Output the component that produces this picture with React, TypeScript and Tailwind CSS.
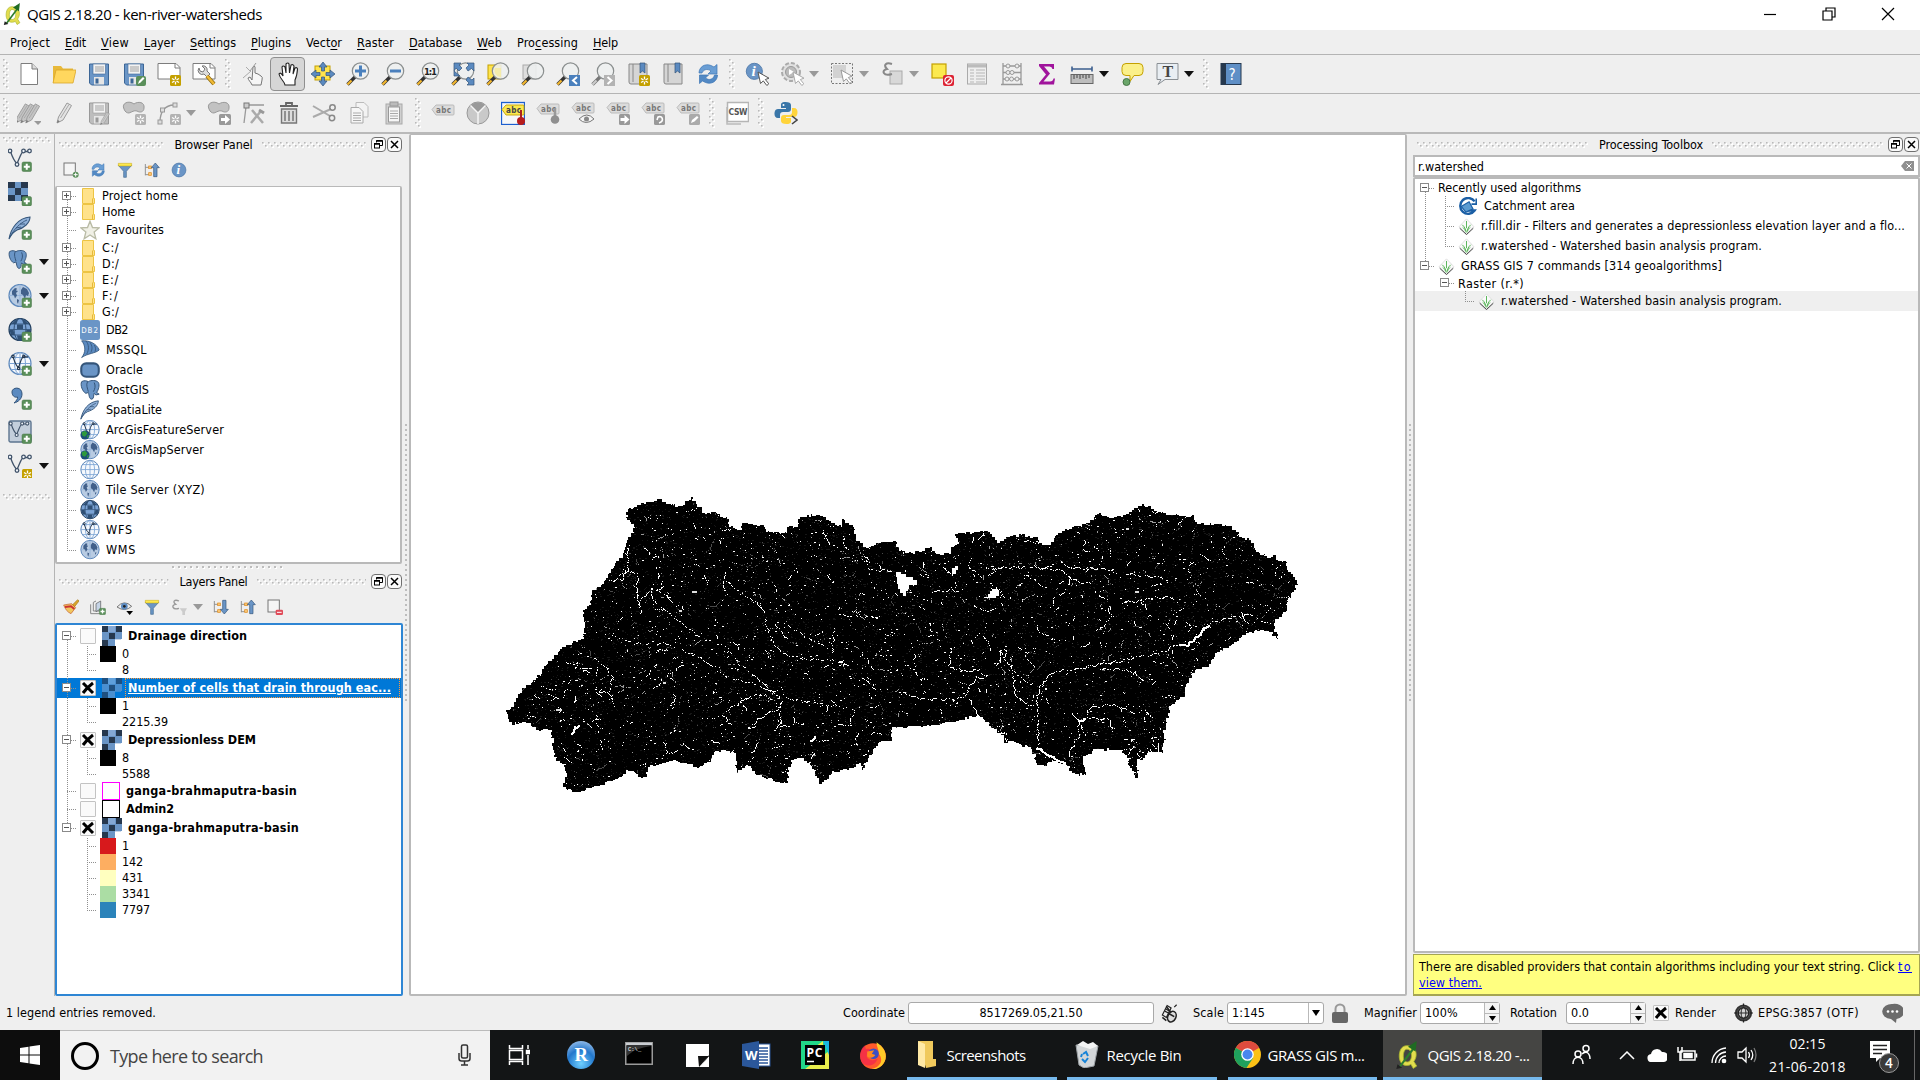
import React, { ReactNode, useLayoutEffect, useRef, useState } from "react";

/* Text set to an exact run width by adjusting its tracking. */
function T({ w, className = "", children }: { w?: number; className?: string; children: ReactNode }) {
  const ref = useRef<HTMLSpanElement>(null);
  const [sp, setSp] = useState(0);
  useLayoutEffect(() => {
    const el = ref.current;
    if (!el || !w) return;
    const n = (el.textContent || "").length || 1;
    setSp((w - el.getBoundingClientRect().width) / n);
  }, []);
  return (
    <span ref={ref} className={"inline-block shrink-0 whitespace-pre " + className} style={{ letterSpacing: sp + "px" }}>
      {children}
    </span>
  );
}

function Svg({ s = 24, vb = 24, children }: { s?: number; vb?: number; children: ReactNode }) {
  return (
    <svg width={s} height={s} viewBox={`0 0 ${vb} ${vb}`} fill="none" className="block shrink-0">
      {children}
    </svg>
  );
}

const Defs = () => (
  <svg width="0" height="0" className="absolute">
    <defs>
      <pattern id="gv" width="6" height="6" patternUnits="userSpaceOnUse">
        <rect x="1" y="1" width="2" height="2" fill="#fff" />
        <rect width="1.6" height="1.6" fill="#b9b9b9" />
        <rect x="4" y="4" width="2" height="2" fill="#fff" />
        <rect x="3" y="3" width="1.6" height="1.6" fill="#b9b9b9" />
      </pattern>
      <pattern id="gd" width="6" height="5" patternUnits="userSpaceOnUse">
        <rect x="1" y="1" width="2" height="2" fill="#fff" />
        <rect width="2" height="2" fill="#bdbdbd" />
      </pattern>
    </defs>
  </svg>
);

const GripV = ({ w = 14 }: { w?: number }) => (
  <div className={(w === 11 ? "w-[11px]" : "w-[14px]") + " flex shrink-0 justify-center"}>
    <svg width="6" height="30" className="block"><rect width="6" height="30" fill="url(#gv)" /></svg>
  </div>
);
const GripH = () => (
  <svg className="block h-[6px] min-w-0 flex-1"><rect width="100%" height="6" fill="url(#gv)" /></svg>
);

/* ---------- badges ---------- */
const Plus = ({ x = 15, y = 15 }) => (
  <g transform={`translate(${x} ${y})`}>
    <rect width="9.5" height="9.5" rx="1.6" fill="#5a8f5a" stroke="#467546" strokeWidth=".5" />
    <path d="M4.75 1.8v6M1.8 4.75h6" stroke="#fff" strokeWidth="2" />
  </g>
);
const Star = ({ x = 13, y = 13, c = "#c4a000" }) => (
  <g transform={`translate(${x} ${y})`}>
    <rect width="11" height="11" rx="1.5" fill={c} />
    <path d="M5.5 1.5v8M2 3.5l7 4M9 3.5l-7 4" stroke="#fff" strokeWidth="1.3" />
    <circle cx="5.5" cy="5.5" r="1.3" fill={c} />
  </g>
);
const Lens = ({ children, gray = false }: { children?: ReactNode; gray?: boolean }) => (
  <g>
    <path d="M9 15l-7.5 7.500" stroke={gray ? "#777" : "#333"} strokeWidth="3.4" />
    <path d="M5.500 18.500l-4 4" stroke={gray ? "#ccc" : "#f5b82e"} strokeWidth="2.200" />
    <circle cx="14.500" cy="9" r="8.200" fill="#eef0f0" fillOpacity=".88" stroke="#8b8f8f" strokeWidth="1.200" />
    {children}
  </g>
);
const Cursor = ({ x = 13, y = 10, c = "#555" }) => (
  <path transform={`translate(${x} ${y})`} d="M0 0l2.500 11.500 2.800-2.600 3.500 4.600 2-1.700-3.500-4.300 3.700-1.300z" fill="#fff" stroke={c} strokeWidth="1" />
);
const Tag = ({ y = 3, hot = false }) => (
  <g transform={`translate(0 ${y})`}>
    <path d="M1 5.500L5 1h17q1 0 1 1v8q0 1-1 1H5z" fill={hot ? "#fce94f" : "#dcdcdc"} stroke={hot ? "#c4a000" : "#b5b5b5"} strokeWidth=".9" />
    <text x="5" y="9" fontFamily="DejaVu Sans Condensed" fontWeight="700" fontSize="8" fill={hot ? "#444" : "#777"} textLength="15">{"abc"}</text>
  </g>
);
const Pencil = ({ x = 0, c = "#e3e3e3" }) => (
  <g transform={`translate(${x} 0)`}>
    <path d="M4 22l1.500-6L14 2l4.500 2.500L10 19z" fill={c} stroke="#9b9b9b" />
    <path d="M4 22l.8-3 2 1.200z" fill="#777" />
    <path d="M7.500 17L16 3.500" stroke="#aaa" />
  </g>
);
const Blob = () => <path d="M2 8C-1 2 7-1 12 3c4-3 11-2 10 4 0 4-4 5-7 3-3-1-5 1-8 2-2 0-4-1-5-4z" fill="#c2c2c2" stroke="#999" />;
const Folder = () => (
  <g>
    <path d="M1 21V4h8l2 2.500h10V9H6L2 21z" fill="#e8b93a" />
    <path d="M1 21L4 8h20l-3 13z" fill="#ffd75e" stroke="#d9a62a" strokeWidth=".8" />
  </g>
);
const Floppy = ({ c = "#6a95c6", d = "#3c6696" }) => (
  <g>
    <path d="M2.500 2h19v21h-17l-2-2z" fill={c} stroke={d} />
    <rect x="6" y="2" width="12.500" height="10" fill="#f2f2f2" stroke={d} strokeWidth=".6" />
    <path d="M8 5h9M8 7h9M8 9h9" stroke="#999" strokeWidth=".9" />
    <rect x="7" y="15" width="10" height="7.500" fill="#e6e6e6" />
    <rect x="8.500" y="16.500" width="3" height="5" fill={d} />
  </g>
);
const Refresh = () => (
  <g>
    <path d="M3 11C3 5 9 1 15 3.500L18 5l3-2.500V12h-9l3-3c-4-3-8-1-9 2z" fill="#6a9ed4" stroke="#3c76b4" strokeWidth=".7" />
    <path d="M21.500 13c0 6-6 10-12 7.500L6.500 19l-3 2.500V13h9l-3 3c4 3 8 1 9-3z" fill="#5289c4" stroke="#3c76b4" strokeWidth=".7" />
  </g>
);
const Info = () => (
  <g>
    <circle cx="11" cy="11" r="9.500" fill="#6a95c6" stroke="#4a76a8" />
    <text x="7.500" y="17" fontFamily="Liberation Serif" fontStyle="italic" fontWeight="700" fontSize="18" fill="#fff">i</text>
  </g>
);
const Nodes = () => (
  <g stroke="#41536a" strokeWidth="1.300">
    <path d="M2.500 3.500C4 8 6 13 9 15.500 11 12 13 4 15.500 3.500h6" />
    {[[2, 3], [15.5, 3], [21.5, 3], [9, 16.500]].map(([x, y], i) => <circle key={i} cx={x} cy={y} r="1.800" fill="#eef3f8" />)}
  </g>
);
const Globe = ({ k = "wms", children }: { k?: string; children?: ReactNode }) => (
  <g>
    <circle cx="12" cy="11.500" r="11" fill={k === "wcs" ? "#7ba3d4" : k === "wms" ? "#b8cbe2" : "#f6f9fd"} stroke={k === "wcs" ? "#24405f" : "#5d88bb"} strokeWidth="1.200" />
    {k === "wms" ? (
      <g>
        <path d="M12 .5v22M1 11.500h22" stroke="#8fb0d8" strokeWidth=".8" />
        <path d="M4 7l3-3 2 .5-1 2 2 .5-2 2 1 2.500-2 3-1-3-2-1zM13 6l2-3 4 2 2 4-1 3-2-1-1 4-2-4-2-1zM9 15l2 1-1 4-1-2zM18 15l2 0-2 3z" fill="#41608a" />
      </g>
    ) : k === "wcs" ? (
      <g>
        <path d="M8 1.500h2L8.500 6H3.500zM14 1.500h2L20.500 6h-5zM9 6.500h6v4.500H9zM1.500 12h4l1 5H3zM22.500 12h-4l-1 5H21zM9 17.500h6l-1 5h-4z" fill="#2f4f74" />
        <path d="M1 11.500h22M3 6h18M3 17h18" stroke="#2f4f74" strokeWidth=".8" />
        <ellipse cx="12" cy="11.500" rx="6" ry="11" stroke="#2f4f74" />
      </g>
    ) : (
      <g stroke="#7ba3d4">
        <path d="M12 .5v22M1 11.500h22M3 5.500h18M3 17.500h18" />
        <ellipse cx="12" cy="11.500" rx="5.500" ry="11" />
      </g>
    )}
    {k === "wfs" && <g transform="translate(3 2) scale(.8)" stroke="#26384e" strokeWidth="1.500"><path d="M2.500 3.500C4 8 6 15 9.500 17 11 12 13 4 15.500 3.500h6" /><circle cx="2.500" cy="3" r="1.500" /><circle cx="16" cy="3" r="1.500" /><circle cx="9.500" cy="18" r="1.500" /></g>}
    {children}
  </g>
);
const Arc = () => <g><circle cx="6" cy="18" r="5.500" fill="#1d4f7a" /><path d="M2 15l4-2 3 3-3 4-3-1zM8 19l3-1-2 4z" fill="#2f9a3c" /></g>;
const Elephant = () => (
  <g fill="#6a95c6" stroke="#34557a" strokeWidth="1.200">
    <path d="M2 2c3-2 6-1 8 0 3-2 10-2 12 1 2 3 0 9-2 12l3 2-4 1-2-2c-1 2 0 7-3 7s-3-5-4-8l-3 1C3 14 0 6 2 2z" />
    <path d="M9 2c-2 4 0 8 1 12M17 3c2 4 1 8-1 11" />
  </g>
);
const Feather = () => (
  <g>
    <path d="M1 23C3 12 10 2 22 1c0 6-6 11-13 13-4 2-6 5-8 9z" fill="#8fb0d8" stroke="#34557a" strokeWidth="1.100" />
    <path d="M2 21C6 13 12 7 19 4M8 12l5-1M12 8l5 0" stroke="#34557a" strokeWidth=".9" />
  </g>
);
const Checker = ({ hl = false }: { hl?: boolean }) => {
  const d = hl ? "#1f5080" : "#26384e";
  const m = hl ? "#4a8fd0" : "#6a95c6";
  return (
    <g shapeRendering="crispEdges">
      <rect width="20" height="13" fill={m} /><rect y="13" width="13" height="7" fill={m} />
      <path d={"M0 0h6v6H0zM14 0h6v6h-6zM7 7h6v6H7zM0 14h6v6H0z"} fill={d} />
      <path d="M6 0h7v6H6z" fill={hl ? "#5fa0dc" : "#84a8d4"} />
      <path d="M13 13.500h6" stroke={hl ? "#4a8fd0" : "#b9cce4"} strokeWidth=".8" />
    </g>
  );
};
const BigChecker = () => (
  <g shapeRendering="crispEdges">
    <rect width="20" height="19" fill="#6a95c6" />
    <path d="M0 0h7v6H0zM13 0h7v6h-7zM7 6h6v7H7zM0 13h7v6H0zM13 13h7v6h-7z" fill="#26384e" />
  </g>
);
const Funnel = () => <g><path d="M2 5h20l-8 9v9h-4v-9z" fill="#6a95c6" stroke="#41698f" /><path d="M2 2h20v4H2z" fill="#fce94f" stroke="#c4a000" strokeWidth=".7" /></g>;
const Expand = ({ up = false }) => (
  <g>
    <path d="M2 3v17M2 8h6M2 19h6" stroke="#8b8b8b" strokeWidth="1.400" />
    <rect x="7" y="6" width="4" height="4" fill="#f8c471" stroke="#e08a1c" /><rect x="7" y="16" width="4" height="4" fill="#f8c471" stroke="#e08a1c" />
    <path transform={up ? "" : "rotate(180 17 12)"} d="M17 1.500l6 7h-3.500V22h-5V8.500H11z" fill="#6a95c6" stroke="#34557a" />
  </g>
);
const QLogo = ({ s = 22 }) => (
  <Svg s={s}>
    <path d="M11 4C6 4 4.500 9 4.500 13S6.500 21 11 21c1.500 0 2.500-.3 3.500-1l2 3.500 3-2-2.500-4c1.500-2 2-4 2-6C19 7 16 4 11 4zm0 3c3 0 4 3 4 5.500S14 18 11.500 18 8 16 8 13s1-6 3-6z" fill="#e3dd4e" stroke="#a9b52c" strokeWidth=".7" />
    <path d="M5 22L17 6" stroke="#2d7d2d" strokeWidth="1.800" /><path d="M3 20l4 3-5 1z" fill="#222" /><path d="M19.500 0l-1 9L12 5z" fill="#1f6b23" />
  </Svg>
);
const Grass = () => (
  <Svg s={17} vb={20}>
    <path d="M10 1l8.500 9-8.500 9-8.500-9z" fill="#fafafa" stroke="#dcdcdc" />
    <path d="M2 12l8 7.500 8-7.500" stroke="#333" strokeWidth="1.100" />
    <path d="M9.500 17C9 13 7.500 10 5 8M10 12V3.500M10.500 17c.5-4 2-7 4.500-9M8.500 15C8 13 7 12 5.500 11M11.500 15c.5-2 1.500-3 3-4" stroke="#3faa3f" strokeWidth="1" />
  </Svg>
);

/* ---------- toolbars ---------- */
const B = ({ children, on = false }: { children: ReactNode; on?: boolean }) => (
  <div className={"flex h-[34px] w-[35px] shrink-0 items-center justify-center " + (on ? "rounded-sm border border-[#8f8f8f] bg-[#d6d6d6]" : "")}>
    <Svg>{children}</Svg>
  </div>
);
const Dn = ({ c = "#999" }) => <div className="flex w-[15px] shrink-0 items-center"><svg width="10" height="6"><path d="M0 0h10L5 6z" fill={c} /></svg></div>;

const Toolbar1 = () => (
  <div className="flex h-[39px] shrink-0 items-center border-t border-[#b4b4b4] bg-[#efefef]">
    <GripV w={11} />
    <B><path d="M4 1.500h11l5.500 5.500v15.500H4z" fill="#fff" stroke="#7d7d7d" /><path d="M15 1.500V7h5.500" fill="#ddd" stroke="#7d7d7d" /></B>
    <B><Folder /></B>
    <B><Floppy /></B>
    <B><Floppy /><rect x="14" y="14" width="10" height="10" rx="2" fill="#5a8f5a" /><path d="M16 22l1-3 4-4 1.500 1.500-4 4z" fill="#fff" /></B>
    <B><path d="M1 1.500h18l4 4V17H1z" fill="#fff" stroke="#7d7d7d" /><path d="M18 1.500V6h5" stroke="#7d7d7d" /><Star /></B>
    <B><path d="M1 1.500h18l4 4V17H1z" fill="#fff" stroke="#7d7d7d" /><path d="M18 1.500V6h5" stroke="#7d7d7d" /><path d="M7 6a4 4 0 005 6l3 3 3-3-3-3a4 4 0 00-5-5l3 3-2 3-3-1z" fill="#ddd" stroke="#777" /><path d="M15 14l7 8" stroke="#8b6a10" strokeWidth="4" /><path d="M15 14l7 8" stroke="#f0b935" strokeWidth="2.600" /></B>
    <GripV />
    <B><path d="M2 16L10 9M5 5l4 4" stroke="#aaa" /><path d="M11 23c-1-3-4-5-4-7l2-1 2 3 1-13q1.500-2 2 0v6l3 1 3 2q2 1 1 4l-1 5z" fill="#f6f6f6" stroke="#777" /><path d="M9 9l6-8" stroke="#999" /></B>
    <B on><g transform="translate(1 0)"><path d="M8 23c0-3-5-6-6-11 1-2 3 0 4 2L5 5q1-2 3 0l1 6V2q2-2 3 0l.5 9L14 3q2-1 3 1l-1 8 2-6q2-1 2.500 1-.5 7-2.500 11v5z" fill="#fff" stroke="#222" strokeWidth="1.100" /></g></B>
    <B><rect x="4" y="4" width="15" height="14" fill="#ffe44d" stroke="#c4a000" /><path d="M12 0l4 5h-2.500v4h-3V5H8zM12 24l4-5h-2.500v-4h-3v4H8zM0 12l5-4v2.500h4v3H5V16zM24 12l-5-4v2.500h-4v3h4V16z" fill="#5b8ac0" stroke="#34557a" strokeWidth=".7" /></B>
    <B><Lens><path d="M14.500 3.500v11M9 9h11" stroke="#4a80bd" strokeWidth="3" /></Lens></B>
    <B><Lens><path d="M9 9h11" stroke="#4a80bd" strokeWidth="3" /></Lens></B>
    <B><Lens><text x="8" y="12.500" fontFamily="DejaVu Sans Condensed" fontWeight="700" fontSize="9.500" fill="#222" textLength="13">1:1</text></Lens></B>
    <B><Lens /><path d="M3 1h7L8 3l3 3-3 3-3-3-2 3zM23 1v8l-2.500-2.500L17 9l-2-3 3-3-2-2zM23 23h-7l2-2-3-3 2-3 4 3 2-2zM3 14V9l6 5z" fill="#5b8ac0" stroke="#34557a" strokeWidth=".7" /></B>
    <B><rect x="2" y="3" width="13" height="14" fill="#ffe44d" stroke="#c4a000" /><Lens><path d="M9 6h6v9a6.500 6.500 0 01-6-9z" fill="#f4ecaa" /></Lens></B>
    <B><rect x="2" y="3" width="13" height="14" fill="#ddd" stroke="#aaa" /><Lens /></B>
    <B><Lens /><rect x="13" y="13" width="11" height="11" fill="#4a80bd" /><path d="M21 15l-4 3.500 4 3.500" stroke="#fff" strokeWidth="2" /></B>
    <B><Lens gray /><rect x="13" y="13" width="11" height="11" fill="#b3b3b3" /><path d="M16.500 15l4 3.500-4 3.500" stroke="#fff" strokeWidth="2" /></B>
    <B><path d="M3 2h18v20H5q-2 0-2-2z" fill="#d5d5d5" stroke="#888" /><path d="M7 2v18" stroke="#888" /><path d="M14 1h5v10l-2.500-2-2.500 2z" fill="#5b8ac0" stroke="#34557a" strokeWidth=".7" /><Star /></B>
    <B><path d="M3 2h18v20H5q-2 0-2-2z" fill="#d5d5d5" stroke="#888" /><path d="M7 2v18" stroke="#888" /><path d="M14 1h5v10l-2.500-2-2.500 2z" fill="#5b8ac0" stroke="#34557a" strokeWidth=".7" /></B>
    <B><Refresh /></B>
    <GripV />
    <B><g transform="scale(.85)"><Info /></g><Cursor /></B>
    <B><circle cx="11" cy="10" r="9" stroke="#aaa" strokeWidth="2" strokeDasharray="4 2" fill="#e0e0e0" /><circle cx="11" cy="10" r="5.500" fill="#bbb" stroke="#999" /><path d="M9 7l5 3-5 3z" fill="#fff" /><Cursor c="#aaa" /></B>
    <Dn />
    <B><rect x="1.500" y="1.500" width="21" height="20" stroke="#777" strokeDasharray="2 1.500" /><rect x="3" y="3" width="13" height="13" fill="#d2d2d2" /><Cursor x={11} y={8} c="#999" /></B>
    <Dn />
    <B><rect x="10" y="9" width="12" height="13" fill="#d8d8d8" stroke="#aaa" /><path d="M12 2C6 0 3 3 7 7 1 8 3 15 12 12" stroke="#888" strokeWidth="2" /></B>
    <Dn />
    <B><rect x="2" y="2" width="14" height="14" fill="#fce94f" stroke="#c4a000" strokeWidth="1.200" /><rect x="13" y="13" width="11" height="11" rx="2" fill="#d23" /><circle cx="18.500" cy="18.500" r="3.600" stroke="#fff" strokeWidth="1.200" /><path d="M16 21l5-5" stroke="#fff" strokeWidth="1.200" /></B>
    <B><rect x="2.500" y="2" width="19" height="20" fill="#eee" stroke="#aaa" /><path d="M3 4h18" stroke="#bbb" strokeWidth="3" /><path d="M5 8h4M11 8h9M5 11h4M11 11h9M5 14h4M11 14h9M5 17h4M11 17h9M5 20h4M11 20h9" stroke="#b5b5b5" strokeWidth="1.200" /></B>
    <B><path d="M3 1v21M21 1v21M1 22.500h22M3 4h18M3 10.500h18M3 17h18" stroke="#999" strokeWidth="1.300" /><g fill="#ececec" stroke="#999"><circle cx="8" cy="4" r="2" /><circle cx="17" cy="4" r="2" /><circle cx="8" cy="10.500" r="2" /><circle cx="12" cy="10.500" r="2" /><circle cx="7" cy="17" r="2" /><circle cx="11.500" cy="17" r="2" /><circle cx="17" cy="17" r="2" /></g></B>
    <B><path d="M4 2h15v5h-1.500q-.5-2.500-3-2.500H9l6 7-6.500 8H15q3 0 3.500-3H20l-1 6H4v-1.500l7-8.500-7-8.500z" fill="#a0149c" /></B>
    <B><path d="M2 7h20M2 4.500v5M22 4.500v5" stroke="#3c5f8f" strokeWidth="1.600" /><rect x="1" y="12.500" width="22" height="9" fill="#bdbdbd" stroke="#666" /><path d="M4 13v4M7 13v3M10 13v4M13 13v3M16 13v4M19 13v3" stroke="#444" /></B>
    <Dn c="#111" />
    <B><path d="M6 1.500h13q4 0 4 4v4q0 4-4 4h-5l-4 6V13.500H6q-4 0-4-4v-4q0-4 4-4z" fill="#fbf08a" stroke="#c4a000" /><circle cx="6.500" cy="20" r="3.500" fill="#6aa56a" stroke="#467546" /></B>
    <B><path d="M2 1.500h21v16H10l-7 5 3-5H2z" fill="#e9eef3" stroke="#8a8f94" /><text x="7.500" y="15" fontFamily="Liberation Serif" fontWeight="700" fontSize="16" fill="#444">T</text></B>
    <Dn c="#111" />
    <GripV />
    <B><rect x="2" y="1.500" width="20" height="21" fill="#5f8fc6" stroke="#26384e" /><rect x="2" y="1.500" width="5" height="21" fill="#26384e" /><text x="9.500" y="17.500" fontFamily="DejaVu Sans Condensed" fontSize="15" fill="#fff">?</text></B>
  </div>
);

const Toolbar2 = () => (
  <div className="flex h-[39px] shrink-0 items-center border-t border-[#b4b4b4] bg-[#efefef]">
    <GripV w={11} />
    <B><g transform="translate(-5 1) scale(.95)"><Pencil c="#c4c4c4" /></g><g transform="translate(0 1) scale(.95)"><Pencil c="#c4c4c4" /></g><g transform="translate(5 1) scale(.95)"><Pencil c="#c4c4c4" /></g><path d="M17 20h8l-4 4z" fill="#999" /></B>
    <B><Pencil x={1} /></B>
    <B><Floppy c="#bdbdbd" d="#999" /><g transform="translate(11 10) scale(.62)"><Pencil c="#ccc" /></g></B>
    <B><Blob /><Star c="#b3b3b3" /></B>
    <B><path d="M3 21C3 11 8 4 17 4" stroke="#999" strokeWidth="1.300" /><rect x="1" y="19" width="4" height="4" fill="#ddd" stroke="#999" /><rect x="3.500" y="7" width="4" height="4" fill="#ddd" stroke="#999" /><rect x="16" y="2" width="4" height="4" fill="#ddd" stroke="#999" /><Star c="#b3b3b3" /></B>
    <Dn />
    <B><Blob /><rect x="12" y="13" width="12" height="11" rx="1.500" fill="#999" /><path d="M14 17h4v-3l5 4.500-5 4.500v-3h-4z" fill="#fff" /></B>
    <B><path d="M5 4h17M4 6L2 22" stroke="#999" strokeWidth="1.300" /><rect x="2" y="2" width="5" height="5" fill="#ccc" stroke="#777" /><path d="M10 9l11 13M19 10L9 22" stroke="#aaa" strokeWidth="2.500" /><path d="M17 9l5 3" stroke="#999" strokeWidth="3" /></B>
    <B><path d="M3 5h18M9 5V2h6v3" stroke="#666" strokeWidth="1.800" /><path d="M4.500 8h15v14h-15z" fill="#ddd" stroke="#777" strokeWidth="1.400" /><path d="M8 10v10M12 10v10M16 10v10" stroke="#888" strokeWidth="1.800" /></B>
    <B><path d="M1 5l17 10M1 16L19 8" stroke="#aaa" strokeWidth="2" /><circle cx="20.500" cy="6.500" r="2.700" stroke="#888" strokeWidth="1.500" /><circle cx="20" cy="17" r="2.700" stroke="#888" strokeWidth="1.500" /></B>
    <B><path d="M9 1.500h8l4 4V16H9z" fill="#f3f3f3" stroke="#bbb" /><path d="M4 6.500h8l4 4V22H4z" fill="#f6f6f6" stroke="#aaa" /><path d="M6 12h8M6 14.500h8M6 17h8M6 19.500h8" stroke="#aaa" /></B>
    <B><rect x="4" y="3" width="16" height="20" fill="#d0d0d0" stroke="#aaa" /><rect x="6.500" y="6" width="11" height="15" fill="#f6f6f6" stroke="#999" /><rect x="8" y="1" width="8" height="4" fill="#bbb" stroke="#999" /><path d="M8 10h8M8 12.500h8M8 15h8M8 17.500h8" stroke="#aaa" /></B>
    <GripV />
    <B><Tag /></B>
    <B><circle cx="12" cy="12" r="11" fill="#c9c9c9" stroke="#999" /><path d="M12 12L4 5a11 11 0 0116 0z" fill="#999" /><path d="M12 23V12L4.500 4.500M12 12l7.500-7.500" stroke="#f5f5f5" strokeWidth="1.500" /></B>
    <B><rect x=".5" y="1.500" width="23" height="22" fill="#f7f7f7" stroke="#1c5fcf" strokeWidth="1.300" /><Tag hot /><path d="M20 9v9" stroke="#a22" strokeWidth="2" /><circle cx="20" cy="20" r="4" fill="#b71c1c" /></B>
    <B><Tag y={2} /><path d="M19 7v10" stroke="#999" strokeWidth="2.500" /><circle cx="19" cy="18.500" r="4.300" fill="#8f8f8f" /></B>
    <B><Tag y={1} /><path d="M8 18q8-8 15 0-8 7-15 0z" fill="#f5f5f5" stroke="#777" /><circle cx="15.500" cy="18" r="2.500" fill="#888" /></B>
    <B><Tag y={1} /><rect x="13" y="13" width="11" height="11" rx="1.500" fill="#999" /><path d="M14.500 17h4v-3l5 4.500-5 4.500v-3h-4z" fill="#fff" /></B>
    <B><Tag y={1} /><rect x="13" y="13" width="11" height="11" rx="1.500" fill="#999" /><path d="M18 22c6-2 3-8-1-6l-1 3" stroke="#fff" strokeWidth="1.600" /></B>
    <B><Tag y={1} /><rect x="13" y="13" width="11" height="11" rx="1.500" fill="#aaa" /><path d="M15 22l1-3 5-4 1.500 1.500-4 4z" fill="#fff" /></B>
    <GripV />
    <B><path d="M2 6v17h14" stroke="#bbb" strokeWidth="1.500" /><rect x="2.500" y="1.500" width="21" height="19" fill="#fff" stroke="#b5b5b5" strokeWidth="1.500" /><text x="3.500" y="14" fontFamily="DejaVu Sans Condensed" fontWeight="700" fontSize="8.500" fill="#555" textLength="19">CSW</text></B>
    <GripV />
    <B><path d="M11.500 1C7 1 7 3 7 4v3h5v1H4c-3 0-3.500 3-3.500 5s1 4 3.500 4h2v-3c0-2 1-3 3-3h5c2 0 3-1 3-3V4c0-2-2-3-5.500-3z" fill="#3a76a8" /><path d="M12.500 23c4.500 0 4.500-2 4.500-3v-3h-5v-1h8c3 0 3.500-3 3.500-5s-1-4-3.500-4h-2v4c0 2-1 3-3 3h-5c-2 0-3 1-3 3v3c0 2 2 3 5.500 3z" fill="#ffd43b" /><circle cx="9.500" cy="4" r="1" fill="#fff" /><path d="M18 15l5 4-5 4" stroke="#444" strokeWidth="1.600" /></B>
  </div>
);

const L = ({ children, dn = false }: { children: ReactNode; dn?: boolean }) => (
  <div className="flex h-[34px] shrink-0 items-center pl-2">
    <Svg>{children}</Svg>
    <div className="w-[7px]" />
    {dn && <Dn c="#111" />}
  </div>
);
const LeftBar = () => (
  <div className="flex h-full w-[55px] shrink-0 flex-col border-r border-[#b4b4b4]">
    <div className="flex h-[9px] shrink-0 items-end px-[3px]"><GripH /></div>
    <L><Nodes /><Plus x={14} y={14} /></L>
    <L><BigChecker /><Plus x={14} y={14.500} /></L>
    <L><Feather /><Plus x={14} y={14} /></L>
    <L dn><g transform="scale(.8)"><Elephant /></g><Plus x={14} y={14} /></L>
    <L dn><Globe /><Plus x={14} y={14} /></L>
    <L><Globe k="wcs" /><Plus x={14} y={14} /></L>
    <L dn><Globe k="wfs" /><Plus x={14} y={14} /></L>
    <L><path d="M4 6c0-5 10-6 10 2 0 5-4 8-8 9 2-2 4-4 3.500-6C6 12 4 9 4 6z" fill="#5b8ac0" stroke="#34557a" /><Plus x={14} y={14} /></L>
    <L><rect x="1" y="1" width="22" height="21" rx="1.500" fill="#c3cedb" stroke="#5e7690" strokeWidth="1.400" /><g transform="translate(1 1) scale(.85)"><Nodes /></g><Plus x={14} y={14} /></L>
    <L dn><Nodes /><Star x={14} y={15} /></L>
    <div className="flex h-[17px] shrink-0 items-end px-[3px]"><GripH /></div>
  </div>
);

/* ---------- dock parts ---------- */
const DockBtn = ({ close = false }) => (
  <div className="flex h-[15px] w-[15px] shrink-0 items-center justify-center rounded-sm border border-[#6f6f6f] bg-[#fafafa]">
    <Svg s={11} vb={11}>
      {close ? <path d="M2 2l7 7M9 2l-7 7" stroke="#000" strokeWidth="1.500" /> : <g stroke="#000"><path d="M3.500 1.500h6v5h-3M3.500 1.500v2" /><path d="M3.500 2h6" strokeWidth="1.500" /><rect x="1.500" y="4.500" width="5" height="4.500" /><path d="M1.500 5h5" strokeWidth="1.500" /></g>}
    </Svg>
  </div>
);
const DockTitle = ({ title, w }: { title: string; w: number }) => (
  <div className="flex h-[17px] shrink-0 items-center gap-px pl-1 pr-px">
    <GripH />
    <T w={w} className="ml-2.5 mr-2">{title}</T>
    <GripH />
    <div className="w-[3px]" />
    <DockBtn />
    <DockBtn close />
  </div>
);

type BrP = { h: number; v?: "full" | "top" | "bottom" | "none"; b?: boolean; ex?: "+" | "-" };
const Br = ({ h, v = "full", b = true, ex }: BrP) => {
  const m = Math.floor(h / 2);
  const y1 = v === "bottom" ? m : 0;
  const y2 = v === "top" ? m : h;
  return (
    <svg width="20" height={h} className="block shrink-0" shapeRendering="crispEdges">
      {v !== "none" && <path d={`M10.500 ${y1}V${y2}`} stroke="#8f8f8f" strokeDasharray="1 1" />}
      {b && <path d={`M10 ${m + 0.5}H20`} stroke="#8f8f8f" strokeDasharray="1 1" />}
      {ex && (
        <g>
          <rect x="5.500" y={m - 4.500} width="8" height="8" fill="#fff" stroke="#8a8a8a" />
          <path d={`M7 ${m - 0.5}h5`} stroke="#555" />
          {ex === "+" && <path d={`M9.500 ${m - 3}v5`} stroke="#555" />}
        </g>
      )}
    </svg>
  );
};

const FolderS = () => (
  <svg width="16" height="16" className="block shrink-0"><path d="M2.500 .5h11v10h1v5h-12z" fill="#ffe28a" stroke="#edc443" /><path d="M12.500 10.500v5" stroke="#e6b93a" /></svg>
);
const SmallRow = ({ t, w, v = "full" }: { t: string; w: number; v?: "full" | "bottom" }) => (
  <div className="flex h-4 items-center"><Br h={16} v={v} ex="+" /><div className="w-[3px]" /><FolderS /><T w={w} className="ml-1.5">{t}</T></div>
);
const BigRow = ({ t, w, last = false, children }: { t: string; w: number; last?: boolean; children: ReactNode }) => (
  <div className="flex h-5 items-center"><Br h={20} v={last ? "top" : "full"} /><div className="w-[3px]" /><Svg s={20}>{children}</Svg><T w={w} className="ml-1.5">{t}</T></div>
);

const BrowserPanel = () => (
  <div className="flex h-[430px] shrink-0 flex-col pt-0.5">
    <DockTitle title="Browser Panel" w={78} />
    <div className="flex h-[33px] shrink-0 items-center gap-[11px] pl-2">
      <Svg s={16}><rect x="1.500" y="1.500" width="17" height="18" fill="#f5f5f5" stroke="#777" strokeWidth="1.500" /><circle cx="19" cy="19" r="4.500" fill="#5a8f5a" /><path d="M19 16v6M16 19h6" stroke="#fff" strokeWidth="1.500" /></Svg>
      <Svg s={16}><Refresh /></Svg>
      <Svg s={16}><Funnel /></Svg>
      <Svg s={16}><Expand up /></Svg>
      <Svg s={16} vb={22}><Info /></Svg>
    </div>
    <div className="mr-px flex-1 overflow-hidden rounded-[2px] border-2 border-t border-[#b9b9b9] bg-white pt-px">
      <SmallRow t="Project home" w={76} v="bottom" />
      <SmallRow t="Home" w={33} />
      <BigRow t="Favourites" w={58}><path d="M12 1.500l3 7.500 8 .5-6 5 2 8-7-4.500L5 22.500l2-8-6-5L9 9z" fill="#f0f0e6" stroke="#b9bba5" strokeWidth="1.600" /></BigRow>
      {["C:/", "D:/", "E:/", "F:/", "G:/"].map((t) => <SmallRow key={t} t={t} w={17} />)}
      <BigRow t="DB2" w={22}><rect width="24" height="24" rx="3" fill="#6a95c6" /><text x="1.500" y="15.500" fontFamily="DejaVu Sans Condensed" fontSize="9.500" fill="#fff" textLength="20">DB2</text></BigRow>
      <BigRow t="MSSQL" w={41}><path d="M2 1c8-1 18 3 21 11-4 4-14 4-21 9C7 15 7 7 2 1z" fill="#5b8ac0" stroke="#34557a" /><path d="M7 1c4 4 4 11 1 16M12 3c3 4 3 8 1 12M17 6c2 3 2 5 1 8" stroke="#34557a" /></BigRow>
      <BigRow t="Oracle" w={37}><rect x="1.500" y="4" width="21" height="16" rx="6" fill="#6a95c6" stroke="#34557a" strokeWidth="2.500" /></BigRow>
      <BigRow t="PostGIS" w={43}><Elephant /></BigRow>
      <BigRow t="SpatiaLite" w={56}><Feather /></BigRow>
      <BigRow t="ArcGisFeatureServer" w={118}><Globe k="wfs" /><Arc /></BigRow>
      <BigRow t="ArcGisMapServer" w={98}><Globe /><Arc /></BigRow>
      <BigRow t="OWS" w={29}><Globe k="ows" /></BigRow>
      <BigRow t="Tile Server (XYZ)" w={99}><Globe /></BigRow>
      <BigRow t="WCS" w={27}><Globe k="wcs" /></BigRow>
      <BigRow t="WFS" w={27}><Globe k="wfs" /></BigRow>
      <BigRow t="WMS" w={30} last><Globe /></BigRow>
    </div>
  </div>
);

const Check = ({ on = false }) => (
  <div className="ml-[3px] flex h-4 w-4 shrink-0 items-center justify-center rounded-[1px] border border-[#c3c3c3] bg-[#fafafa]">
    {on && <Svg s={14} vb={14}><path d="M2 2c3 3 6 6 10 10M12 2C8 5 5 8 2 12" stroke="#000" strokeWidth="3" /></Svg>}
  </div>
);
const RasterRow = ({ t, w, on = false, sel = false, v = "full" }: { t: string; w: number; on?: boolean; sel?: boolean; v?: "full" | "bottom" | "top" }) => (
  <div className={"flex h-5 items-center " + (sel ? "bg-[#0078d7] text-white" : "")}>
    <Br h={20} v={v} ex="-" />
    <Check on={on} />
    <div className="w-1.5 shrink-0" />
    <Svg s={20} vb={20}><Checker hl={sel} /></Svg>
    <div className={"ml-[3px] flex h-5 flex-1 items-center pl-0.5 " + (sel ? "mr-px border border-dotted border-[#ff9a3c]" : "border border-transparent")}>
      <T w={w} className={"font-bold " + (sel ? "underline" : "")}>{t}</T>
    </div>
  </div>
);
const ClassRow = ({ t, w, c, last = false, line = true }: { t: string; w: number; c: string; last?: boolean; line?: boolean }) => (
  <div className="flex h-4 items-center">
    <Br h={16} v={line ? "full" : "none"} b={false} />
    <Br h={16} v={last ? "top" : "full"} />
    <div className={"ml-[3px] h-4 w-4 shrink-0 " + c} />
    <T w={w} className="ml-1.5">{t}</T>
  </div>
);
const VectorRow = ({ t, w, c }: { t: string; w: number; c: string }) => (
  <div className="flex h-[18px] items-center">
    <Br h={18} />
    <Check />
    <div className={"ml-1.5 h-[18px] w-[18px] shrink-0 border bg-white " + c} />
    <T w={w} className="ml-1.5 font-bold">{t}</T>
  </div>
);
const LayersPanel = () => (
  <div className="flex min-h-0 flex-1 flex-col">
    <div className="flex h-[9px] shrink-0 items-start justify-center pt-0.5"><svg width="114" height="3"><rect width="114" height="3" fill="url(#gd)" /></svg></div>
    <DockTitle title="Layers Panel" w={68} />
    <div className="flex h-[33px] shrink-0 items-center gap-[11px] pl-2">
      <Svg s={16}><path d="M14 9l8-8 2 2-7 9z" fill="#d9a62a" stroke="#a6761a" /><path d="M1 9l12-2 6 6-7 9C7 20 3 15 1 9z" fill="#f0c75e" stroke="#c4582a" /><path d="M3 12l9-1 5 4" stroke="#c33" strokeWidth="3" /></Svg>
      <Svg s={16}><path d="M1 8v14h14M5 5v13h13M5 5l4-2" stroke="#888" strokeWidth="1.500" /><path d="M9 7l7-4v12l-7 4z" fill="#c6d4e6" stroke="#555" /><Plus x={14} y={14} /></Svg>
      <Svg s={16}><path d="M0 12Q11 0 22 11 12 20 0 12z" fill="#eee" stroke="#777" strokeWidth="1.500" /><circle cx="11" cy="11" r="5" fill="#5b8ac0" /><circle cx="11" cy="11" r="2" fill="#222" /><path d="M14 18h10l-5 6z" fill="#000" /></Svg>
      <Svg s={16}><Funnel /></Svg>
      <div className="flex items-center gap-1.5"><Svg s={16}><path d="M12 3C5 0 2 4 7 8 0 9 2 17 12 14" stroke="#999" strokeWidth="2" /><path d="M13 14h11l-3 5v5h-4v-5z" fill="#ccc" /></Svg><div className="w-2.5"><Dn /></div></div>
      <div className="-ml-px flex gap-[11px]"><Svg s={16}><Expand /></Svg><Svg s={16}><Expand up /></Svg><Svg s={16}><rect x="1.500" y="1.500" width="17" height="18" fill="#f5f5f5" stroke="#777" strokeWidth="1.500" /><rect x="13" y="16" width="11" height="8" rx="2" fill="#e04b59" /><path d="M15 20h7" stroke="#fff" strokeWidth="1.500" /></Svg></div>
    </div>
    <div className="flex-1 overflow-hidden rounded-[2px] border-2 border-[#2e86d4] bg-white pt-px">
      <RasterRow t="Drainage direction" w={119} v="bottom" />
      <ClassRow t="0" w={7} c="bg-black" />
      <ClassRow t="8" w={7} c="bg-white" last />
      <RasterRow t="Number of cells that drain through eac..." w={263} on sel />
      <ClassRow t="1" w={7} c="bg-black" />
      <ClassRow t="2215.39" w={46} c="bg-white" last />
      <RasterRow t="Depressionless DEM" w={128} on />
      <ClassRow t="8" w={7} c="bg-black" />
      <ClassRow t="5588" w={28} c="bg-white" last />
      <VectorRow t="ganga-brahmaputra-basin" w={171} c="border-[#ff00ff]" />
      <VectorRow t="Admin2" w={48} c="border-black" />
      <RasterRow t="ganga-brahmaputra-basin" w={171} on v="top" />
      <ClassRow t="1" w={7} c="bg-[#d7191c]" line={false} />
      <ClassRow t="142" w={21} c="bg-[#fdae61]" line={false} />
      <ClassRow t="431" w={21} c="bg-[#ffffbf]" line={false} />
      <ClassRow t="3341" w={28} c="bg-[#abdda4]" line={false} />
      <ClassRow t="7797" w={28} c="bg-[#2b83ba]" line={false} last />
    </div>
  </div>
);

/* ---------- drainage raster ---------- */
const OUT: number[] = [22,690,45,675,50,655,70,625,110,595,140,555,180,512,218,488,255,470,258,435,252,390,275,370,278,330,305,315,335,268,372,225,385,180,408,140,382,110,390,85,430,70,475,58,515,75,550,78,575,52,595,80,610,98,650,98,685,118,690,140,725,150,730,130,795,140,800,155,860,158,865,142,900,140,903,112,950,105,990,118,995,130,1027,138,1030,118,1062,140,1070,180,1100,205,1150,185,1190,185,1200,212,1235,220,1270,212,1292,202,1312,222,1350,222,1355,200,1380,195,1368,162,1475,155,1495,190,1520,172,1565,165,1610,172,1630,195,1650,195,1670,165,1720,140,1770,128,1800,100,1825,112,1865,110,1890,95,1932,72,1965,92,2010,105,2050,108,2080,105,2095,132,2145,132,2190,138,2220,170,2250,180,2280,220,2310,235,2324,222,2330,240,2360,245,2365,270,2382,285,2397,315,2380,340,2360,375,2360,395,2320,430,2338,480,2310,452,2290,450,2240,465,2200,495,2155,520,2130,560,2090,570,2062,620,2058,650,2030,665,2010,690,2000,750,1992,818,1950,812,1938,835,1915,838,1918,895,1906,880,1890,855,1885,825,1870,810,1790,808,1752,835,1760,885,1725,880,1705,855,1660,840,1645,857,1618,855,1600,808,1550,785,1520,788,1515,765,1470,735,1440,705,1380,722,1330,732,1260,738,1180,743,1180,782,1145,785,1100,850,1093,870,1085,850,1050,870,1000,875,990,898,960,915,950,870,915,835,885,835,868,870,868,910,835,905,780,885,750,858,712,880,710,820,670,810,645,820,635,845,600,865,565,850,530,840,490,852,445,860,443,890,425,890,405,872,380,875,370,890,310,915,235,935,190,920,205,880,190,850,165,825,158,750,120,750,80,725,40,735];

const STREAMS: [number, string][] = [
  [1, "1460,262 1530,262 1600,258 1690,272 1715,295 1700,318"],
  [1, "1715,262 1800,265 1850,268"],
  [1, "1880,280 1990,292"],
  [1, "1715,295 1750,308 1780,308"],
  [1, "1570,280 1600,295 1630,320"],
  [1, "1870,365 1930,362 1960,350 2020,352"],
  [2, "2040,490 2060,495 2080,480 2108,450 2125,430"],
  [1, "2125,430 2160,420 2200,410 2260,402"],
  [1, "2035,492 1980,520 1920,528 1850,545 1800,552 1720,568 1665,572 1630,605 1612,650 1616,700 1616,800"],
  [1, "1800,565 1870,568 1905,575 1935,605"],
  [1, "1500,510 1525,550 1545,600 1545,640 1580,670 1612,676"],
  [1, "1525,550 1560,590 1600,615"],
  [2, "1740,718 1760,715"],
  [1, "1760,715 1770,682 1840,672 1910,700"],
  [1, "1736,720 1738,770 1720,800 1705,830"],
  [1, "1736,725 1715,690"],
  [1, "1765,712 1830,718 1838,745"],
  [1, "1440,705 1475,745 1520,760 1520,785 1570,795"],
  [2, "1610,800 1650,825 1700,850"],
  [1, "1200,632 1260,655 1370,658 1405,640 1410,620"],
  [1, "1410,655 1425,685 1440,710"],
  [1, "1355,505 1350,560 1385,572 1440,570 1462,590 1430,595 1400,635"],
  [1, "1245,520 1245,575 1265,598 1290,595"],
  [1, "1300,332 1380,330"],
  [1, "385,200 385,270 365,300 310,300"],
  [1, "415,290 412,340 425,390 428,405"],
  [0, "470,245 480,300 500,340 520,370"],
  [0, "455,320 460,360 510,400 600,470 680,500 720,550 780,600 845,655"],
  [0, "400,490 500,490 600,530 680,590 780,615 845,652"],
  [0, "845,652 960,668 1080,690"],
  [1, "845,655 845,685"],
  [1, "760,730 800,700 845,682"],
  [0, "680,300 720,335 770,365 800,400"],
  [0, "795,410 815,480 850,520 910,535 1000,540 1050,555"],
  [1, "1020,553 1052,556"],
  [0, "1005,440 998,510 1000,540"],
  [0, "850,425 920,470 990,505"],
  [2, "215,755 228,740 240,736"],
  [2, "932,778 950,768"],
  [1, "1103,530 1110,555 1125,570"],
  [0, "1080,590 1100,600 1130,630 1170,625"],
  [0, "1010,400 1060,408 1150,410"],
  [1, "1005,735 1050,733 1060,700"],
  [0, "490,705 530,670"],
  [0, "290,700 295,750 310,810"],
  [0, "280,530 320,560 340,590 330,630 345,680"],
  [0, "820,750 840,740 920,728"],
  [0, "1060,240 1100,240 1110,268 1180,272"],
  [0, "2040,235 2080,245 2060,275"],
  [0, "1570,180 1640,192"],
  [0, "150,660 190,650 215,600"],
  [0, "470,550 440,590"],
  [0, "555,550 500,590 460,630"],
  [0, "680,690 760,645 800,640"],
];

function rng(seed: number) {
  let s = seed;
  return () => {
    s = (s * 1664525 + 1013904223) >>> 0;
    return s / 4294967296;
  };
}
function buildOutline() {
  const r = rng(7);
  let d = "";
  const n = OUT.length / 2;
  for (let i = 0; i < n; i++) {
    const x1 = OUT[i * 2], y1 = OUT[i * 2 + 1];
    const j = (i + 1) % n;
    const x2 = OUT[j * 2], y2 = OUT[j * 2 + 1];
    const k = Math.max(1, Math.round(Math.hypot(x2 - x1, y2 - y1) / 7));
    for (let a = 0; a < k; a++) {
      const x = x1 + ((x2 - x1) * a) / k + (a ? (r() - 0.5) * 8 : 0);
      const y = y1 + ((y2 - y1) * a) / k + (a ? (r() - 0.5) * 8 : 0);
      const px = Math.round(x / 3), py = Math.round(y / 3);
      d += d ? `H${px}V${py}` : `M${px} ${py}`;
    }
  }
  return d + "z";
}
function buildPixels() {
  const r = rng(42);
  const out = ["", "", "", ""];
  const put = (l: number, x: number, y: number, w = 1) => {
    out[l] += `M${Math.round(x)} ${Math.round(y)}h${w}v1h-${w}z`;
  };
  for (let i = 0; i < 9000; i++) put(3, r() * 795, 17 + r() * 295, r() < 0.3 ? 2 : 1);
  for (let i = 0; i < 2300; i++) put(r() < 0.35 ? 1 : 2, r() * 795, 17 + r() * 295);
  for (let i = 0; i < 1500; i++) put(0, r() * 795, 17 + r() * 295, r() < 0.15 ? 2 : 1);
  for (let i = 0; i < 950; i++) {
    let x = r() * 795, y = 20 + r() * 290;
    const tx = x < 400 ? 420 : x < 560 ? 500 : x > 640 ? 560 : 580;
    const ty = x < 400 ? 218 : x < 560 ? 225 : x > 640 ? 165 : 240;
    let a = Math.atan2(ty - y, tx - x) + (r() - 0.5) * 2;
    const len = 2 + r() * r() * 18;
    const lvl = r() < 0.55 ? 0 : r() < 0.5 ? 1 : 2;
    for (let k = 0; k < len; k++) {
      if (r() < 0.6) put(lvl, x, y);
      a += (r() - 0.5) * 0.9;
      x += Math.cos(a);
      y += Math.sin(a);
    }
  }
  for (const [w, s] of STREAMS) {
    const p = s.split(" ").map((q) => q.split(",").map((v) => +v / 3));
    for (let i = 0; i + 1 < p.length; i++) {
      const [x1, y1] = p[i], [x2, y2] = p[i + 1];
      const k = Math.ceil(Math.hypot(x2 - x1, y2 - y1));
      for (let a = 0; a < k; a++) {
        const x = x1 + ((x2 - x1) * a) / k + Math.sin(a * 0.6 + i) * 0.9;
        const y = y1 + ((y2 - y1) * a) / k + Math.cos(a * 0.5 + i) * 0.9;
        if (w > 1) for (let q = 0; q < w; q++) put(0, x, y + q, w);
        else if (r() < (w ? 0.72 : 0.5)) put(0, x, y);
      }
    }
  }
  return out;
}
const OUTLINE = buildOutline();
const PIX = buildPixels();
const Canvas = () => (
  <div className="min-w-0 flex-1 rounded-[2px] border-2 border-t border-[#b9b9b9] bg-white pl-[88px] pt-[345px]">
    <svg width="810" height="330" className="block" shapeRendering="crispEdges">
      <clipPath id="basin"><path d={OUTLINE} /></clipPath>
      <path d={OUTLINE} fill="#000" />
      <g clipPath="url(#basin)">
        <path d={PIX[3]} fill="#161616" />
        <path d={PIX[2]} fill="#4a4a4a" />
        <path d={PIX[1]} fill="#9a9a9a" />
        <path d={PIX[0]} fill="#fff" />
      </g>
      <path d="M397 92h5v2h5v3h7v3h4v5h-8v3h-1v3h-2v5h-3v-3h-3v-4h-2v-5h-1v-7h-1zM482 118h3v-1h4v-3h2v-3h2v-2h6v2h1v5h-3v2h-14zM453 88h3v-2h3v4h-2v4h-4z" fill="#fff" />
      <path d="M592 87h2v2h-2zM627 48h3v2h-3zM636 111h4v2h-4zM193 111h5v2h-5zM164 202h3v2h-3zM57 229h6v2h-6zM180 130h3v2h-3z" fill="#ddd" />
    </svg>
  </div>
);

const Splitter = () => (
  <div className="flex w-1.5 shrink-0 items-center justify-center">
    <svg width="3" height="282" className="block">{Array.from({ length: 56 }, (_, i) => <rect key={i} x="0" y={i * 5} width="2" height="2" fill="#bdbdbd" />)}</svg>
  </div>
);

/* ---------- processing toolbox ---------- */
const Toolbox = () => (
  <div className="flex w-[507px] shrink-0 flex-col pt-0.5">
    <DockTitle title="Processing Toolbox" w={104} />
    <div className="mt-0.5 flex h-[22px] shrink-0 items-center justify-between border-2 border-[#b9b9b9] bg-white pl-[3px] pr-1">
      <T w={66} className="pt-px">r.watershed</T>
      <svg width="13" height="10"><path d="M0 5l4-5h9v10H4z" fill="#8f8f8f" /><path d="M5.500 2.500l5 5M10.500 2.500l-5 5" stroke="#fff" /></svg>
    </div>
    <div className="flex-1 overflow-hidden rounded-[2px] border-2 border-[#b9b9b9] bg-white pt-px">
      <div className="flex h-4 items-center"><Br h={16} v="bottom" ex="-" /><T w={143} className="ml-[3px]">Recently used algorithms</T></div>
      <div className="flex h-5 items-center"><Br h={20} b={false} /><Br h={20} /><div className="w-[3px]" /><Svg s={19}><path d="M21 5.500A10 10 0 1021 17H12" stroke="#1b5fa5" strokeWidth="3" /><path d="M23 2v7h-6" stroke="#1b5fa5" strokeWidth="2" /><path d="M4 12L14 6l5 9-9 4z" fill="#5b9bd0" stroke="#1b5fa5" strokeWidth="1.500" /></Svg><T w={91} className="ml-[7px]">Catchment area</T></div>
      <div className="flex h-5 items-center"><Br h={20} b={false} /><Br h={20} /><div className="w-[3px]" /><Grass /><T w={424} className="ml-1.5">r.fill.dir - Filters and generates a depressionless elevation layer and a flo...</T></div>
      <div className="flex h-5 items-center"><Br h={20} b={false} /><Br h={20} v="top" /><div className="w-[3px]" /><Grass /><T w={281} className="ml-1.5">r.watershed - Watershed basin analysis program.</T></div>
      <div className="flex h-5 items-center"><Br h={20} v="top" ex="-" /><div className="w-[3px]" /><Grass /><T w={261} className="ml-1.5">GRASS GIS 7 commands [314 geoalgorithms]</T></div>
      <div className="flex h-[15px] items-center"><div className="w-5" /><Br h={15} v="none" ex="-" /><T w={66} className="ml-[3px]">Raster (r.*)</T></div>
      <div className="flex h-5 items-center bg-[#efefef]"><div className="w-10" /><Br h={20} v="top" /><div className="w-[3px]" /><Grass /><T w={281} className="ml-1.5">r.watershed - Watershed basin analysis program.</T></div>
    </div>
    <div className="mt-px flex h-[42px] shrink-0 flex-col justify-center border border-b-2 border-[#a5a552] bg-[#ffff80] pl-[5px] leading-4">
      <div className="flex"><T w={479}>{"There are disabled providers that contain algorithms including your text string. Click "}</T><T w={14} className="text-[#0000ff] underline">to</T></div>
      <T w={63} className="self-start text-[#0000ff] underline">view them.</T>
    </div>
  </div>
);

/* ---------- status bar ---------- */
const Spin = () => (
  <div className="flex w-[15px] shrink-0 flex-col border-l border-[#b9b9b9] bg-[#f4f4f4]">
    <div className="flex flex-1 items-center justify-center border-b border-[#b9b9b9]"><svg width="7" height="5"><path d="M0 5h7L3.500 0z" /></svg></div>
    <div className="flex flex-1 items-center justify-center"><svg width="7" height="5"><path d="M0 0h7L3.500 5z" /></svg></div>
  </div>
);
const Field = ({ className, children, tail }: { className: string; children: ReactNode; tail?: ReactNode }) => (
  <div className={"flex h-[22px] shrink-0 rounded-[3px] border border-[#a9a9a9] bg-white " + className}>
    <div className="flex flex-1 items-center pl-1">{children}</div>
    {tail}
  </div>
);
const StatusBar = () => (
  <div className="flex h-[34px] shrink-0 items-center pl-1.5">
    <T w={150}>1 legend entries removed.</T>
    <T w={62} className="ml-[687px]">Coordinate</T>
    <div className="ml-[3px] flex h-[22px] w-[246px] shrink-0 items-center justify-center rounded-[3px] border border-[#a9a9a9] bg-white"><T w={103}>8517269.05,21.50</T></div>
    <div className="ml-1.5 w-[33px] shrink-0"><Svg s={19}><path d="M3 14L9 2l5 3-6 12z" fill="#eee" stroke="#222" strokeWidth="1.500" /><path d="M6 9l6 3M7 6l5 3M18 4l3-3" stroke="#222" strokeWidth="1.500" /><ellipse cx="15" cy="16" rx="5" ry="7" fill="#ddd" stroke="#222" strokeWidth="2" transform="rotate(25 15 16)" /><path d="M11 12l7 4M3 17l5 4M8 3l6 8" stroke="#222" strokeWidth="2" /></Svg></div>
    <T w={31}>Scale</T>
    <Field className="ml-[3px] w-[97px]" tail={<div className="flex w-[15px] items-center justify-center border-l border-[#b9b9b9]"><svg width="8" height="6"><path d="M0 0h8L4 6z" /></svg></div>}><T w={33}>1:145</T></Field>
    <div className="ml-2 w-8 shrink-0"><svg width="16" height="20" className="block"><path d="M3.500 10V6a4.500 4.500 0 019 0v4" fill="none" stroke="#999" strokeWidth="2" /><rect x="0" y="9" width="16" height="11" rx="2" fill="#666" /></svg></div>
    <T w={53}>Magnifier</T>
    <Field className="ml-[3px] w-20" tail={<Spin />}><T w={33}>100%</T></Field>
    <T w={47} className="ml-2.5">Rotation</T>
    <Field className="ml-[9px] w-20" tail={<Spin />}><T w={18}>0.0</T></Field>
    <div className="ml-1"><Check on /></div>
    <T w={41} className="ml-1.5">Render</T>
    <div className="ml-[18px] shrink-0"><svg width="19" height="20" viewBox="0 0 20 20" fill="none" stroke="#222" strokeWidth="1.300"><circle cx="10" cy="10" r="8" fill="#555" stroke="#333" strokeWidth="2" /><circle cx="10" cy="10" r="5.500" fill="#d5d5d5" /><ellipse cx="10" cy="10" rx="2.500" ry="6" strokeWidth="1" /><path d="M4 10h12" strokeWidth="1" /><path d="M10 0v3M10 17v3M0 10h3M17 10h3" /></svg></div>
    <T w={101} className="ml-[5px]">EPSG:3857 (OTF)</T>
    <svg width="21" height="20" className="ml-[23px] block shrink-0"><path d="M10.500 1a9.500 7.500 0 014 15l-.5 4-5-4A9.500 7.500 0 0110.500 1z" fill="#6b6b6b" /><g fill="#fff"><circle cx="6" cy="8.500" r="1.300" /><circle cx="10.500" cy="8.500" r="1.300" /><circle cx="15" cy="8.500" r="1.300" /></g></svg>
  </div>
);

/* ---------- windows taskbar ---------- */
const Tk = ({ children }: { children: ReactNode }) => <div className="flex h-full w-[58.500px] shrink-0 items-center justify-center">{children}</div>;
const App1 = ({ t, w, cls, children }: { t: string; w: number; cls: string; children: ReactNode }) => (
  <div className={"flex h-full shrink-0 items-center border-b-[3px] border-[#76b9ed] pt-0.5 " + cls}>
    <div className="flex w-7 shrink-0 justify-center">{children}</div>
    <T w={w} className="ml-1.5">{t}</T>
  </div>
);
const Taskbar = () => (
  <div className="flex h-[50px] shrink-0 bg-[#131516] font-['Open_Sans','Noto_Sans',sans-serif] text-[15px] text-white">
    <div className="flex w-[60px] shrink-0 items-center justify-center bg-[#0d0d0d]"><svg width="20" height="20" fill="#fff"><path d="M0 3l8.500-1.200V9.500H0zM9.500 1.600L20 0v9.500H9.500zM0 10.500h8.500v7.800L0 17zM9.500 10.500H20V20L9.500 18.500z" /></svg></div>
    <div className="flex w-[430px] shrink-0 items-center border-t border-[#bbb] bg-[#f2f2f2] text-[18px] text-[#444]">
      <div className="ml-[11px] h-7 w-7 rounded-full border-[3.500px] border-black" />
      <T w={153} className="ml-[11px]">Type here to search</T>
      <svg width="13" height="22" className="ml-[195px] -mt-0.5" fill="none" stroke="#333" strokeWidth="1.500"><rect x="3.500" y="1" width="6" height="13" rx="1.500" /><path d="M1 9v5.500q0 2.500 2.500 2.500h6q2.500 0 2.500-2.500V9M6.500 17v4M3 21h7" /></svg>
    </div>
    <Tk><svg width="22" height="20" fill="none" stroke="#fff" strokeWidth="1.500"><path d="M1.500 0v3.500h13V0M1.500 20v-3.500h13V20M1.500 5.500h13v9h-13zM20 0v4M20 10v10" /><path d="M18.500 5.500h3v3h-3z" fill="#fff" /></svg></Tk>
    <div className="w-[3px] shrink-0" />
    <Tk><Svg s={28}><defs><radialGradient id="rb" cx=".5" cy=".8" r=".8"><stop offset="0" stopColor="#6fd0ff" /><stop offset=".6" stopColor="#2277cc" /><stop offset="1" stopColor="#8db8e8" /></radialGradient></defs><circle cx="12" cy="12" r="12" fill="url(#rb)" /><text x="6.500" y="17.500" fontFamily="Liberation Serif" fontWeight="700" fontSize="16" fill="#fff">R</text></Svg></Tk>
    <Tk><svg width="28" height="23" className="-mt-1"><rect x=".75" y=".75" width="26.500" height="21.500" fill="#000" stroke="#9a9a9a" strokeWidth="1.500" /><path d="M1 2h26" stroke="#c9cdd2" strokeWidth="2.500" /><path d="M2 4h24q-16 2-24 10z" fill="#333" /><text x="3" y="9" fontFamily="Liberation Mono" fontSize="5.500" fill="#fff">C:\_</text></svg></Tk>
    <Tk><svg width="23" height="23"><path d="M0 0h23v11l-8 12H0z" fill="#fff" /><path d="M23 12v11h-9z" fill="#fff" /><path d="M12 12h11l-10 11z" fill="#111" /></svg></Tk>
    <Tk><svg width="29" height="28"><rect x="14" y="3" width="14" height="22" fill="#fff" stroke="#2b579a" /><path d="M16 7h10M16 10h10M16 13h10M16 16h10M16 19h10M16 22h10" stroke="#2b579a" strokeWidth="1.300" /><path d="M0 3l17-3v28L0 25z" fill="#2b579a" /><text x="3" y="19" fontFamily="Open Sans" fontWeight="700" fontSize="13" fill="#fff" textLength="11">W</text></svg></Tk>
    <Tk><svg width="28" height="28"><rect width="28" height="28" fill="#21d789" /><path d="M14 6L22 0v8zM28 10v18H4z" fill="#e8ed4c" /><path d="M22 0h6v14z" fill="#18b5e0" /><rect x="4" y="4" width="20" height="20" fill="#000" /><text x="5.500" y="15.500" fontFamily="Open Sans" fontWeight="700" fontSize="12" fill="#fff" textLength="16">PC</text><path d="M6 20.500h7" stroke="#fff" strokeWidth="1.500" /></svg></Tk>
    <Tk><Svg s={28}><circle cx="12" cy="13" r="11" fill="#ff5a2b" /><path d="M15 1c3 2 8 6 8 12a11 11 0 01-12 11c8-2 10-8 6-13 0-4-2-6-2-10z" fill="#ffc928" /><path d="M1 13C1 8 3 5 5 4l1 3c2-1 4 0 5 1l-4 3c-2 5 5 7 9 4-2 6-8 8-13 4-1-2-2-4-2-6z" fill="#f2254f" opacity=".75" /><circle cx="12.500" cy="11" r="4.500" fill="#3a4fc4" /><path d="M7 9l6-1-2 3 3 1c-2 3-5 3-7 1z" fill="#ff8a1f" /></Svg></Tk>
    <App1 t="Screenshots" w={79} cls="w-[150px] ml-[4px] pl-[6px]"><svg width="18" height="27"><path d="M0 0h15v18h3v7l-10 2z" fill="#f0c95c" /><path d="M0 0l7 3v24l-7-3z" fill="#ffe9a6" /></svg></App1>
    <App1 t="Recycle Bin" w={75} cls="w-[150px] ml-[10px] pl-[6px]"><svg width="24" height="27"><path d="M1 4l22 1-4 20-10 2-5-3z" fill="#d2d6d8" stroke="#9ba1a5" /><path d="M2 4l6-4 5 3 5-2 5 4-8 3z" fill="#f3f4f4" /><path d="M8 13l3-2 2 4M13 17l-3 4-3-3M6 16l1-3" stroke="#1583d8" strokeWidth="2" fill="none" /></svg></App1>
    <App1 t="GRASS GIS m..." w={97} cls="w-[149px] ml-[11px] pl-[6px]"><Svg s={27}><circle cx="12" cy="12" r="12" fill="#fbc116" /><path d="M12 12L1.600 6A12 12 0 0122.400 6z" fill="#dd4b3e" /><path d="M12 12L1.600 6A12 12 0 0011 24l6-9z" fill="#1fa15d" /><circle cx="12" cy="12" r="5.600" fill="#fff" /><circle cx="12" cy="12" r="4.400" fill="#4a86ef" /></Svg></App1>
    <App1 t="QGIS 2.18.20 -..." w={102} cls="w-[159px] ml-[6px] bg-[#454543] pl-[11px]"><QLogo s={28} /></App1>
    <div className="ml-[30px] flex items-center">
      <svg width="20" height="22" fill="none" stroke="#fff" strokeWidth="1.500"><circle cx="14" cy="4.500" r="3" /><circle cx="6" cy="10" r="3" /><path d="M1 20c0-9 10-9 10 0M10 10c4-4 8-1 8 5" /></svg>
      <svg width="16" height="9" className="ml-[27px]" fill="none" stroke="#fff" strokeWidth="1.500"><path d="M1 8l7-7 7 7" /></svg>
      <svg width="20" height="14" className="ml-3" fill="#fff"><path d="M5 14a4 4 0 01-1-8 6 6 0 0111-2 5 5 0 012 10z" /></svg>
      <svg width="21" height="18" className="ml-[10px]" fill="none" stroke="#fff" strokeWidth="1.500"><rect x="4" y="5" width="14" height="9" /><path d="M7 7.500h8v4H7z" fill="#fff" /><path d="M19.500 7.500v4M1 1v5h4V1M3 6v9" /></svg>
      <svg width="18" height="18" className="ml-3" fill="none" stroke="#fff" strokeWidth="1.300"><path d="M2 17A15 15 0 0116 2M5.500 17A11 11 0 0116 6M9 17a7 7 0 017-7" /><circle cx="14" cy="15" r="1.700" fill="#fff" /></svg>
      <svg width="20" height="18" className="ml-[9px]" fill="none" stroke="#fff" strokeWidth="1.300"><path d="M1 6h4l4-4v14l-4-4H1zM11.500 6q2 3 0 6M14 4q3.500 5 0 10" /><path d="M17 2q4 7 0 14" stroke="#777" /></svg>
    </div>
    <div className="ml-[12px] flex w-[78px] shrink-0 flex-col items-center justify-center text-[14px] leading-[23px]">
      <T w={36}>02:15</T>
      <T w={77}>21-06-2018</T>
    </div>
    <div className="ml-[22px] flex items-center pt-1">
      <svg width="34" height="34"><path d="M1 1h20v17H11l-4 4v-4H1z" fill="#fff" /><path d="M4 5.500h14M4 9.500h14M4 13.500h9" stroke="#222" strokeWidth="1.500" /><circle cx="20" cy="23" r="9.500" fill="#3a3a3a" stroke="#999" /><text x="16" y="28" fontFamily="Open Sans" fontWeight="600" fontSize="13.500" fill="#fff">4</text></svg>
    </div>
    <div className="ml-[11px] h-full w-px bg-[#666]" />
  </div>
);

const Menu = ({ a = "", k, b = "", w }: { a?: string; k: string; b?: string; w: number }) => (
  <T w={w}>{a}<span className="underline underline-offset-2">{k}</span>{b}</T>
);

export default function App() {
  return (
    <div className="flex h-[1080px] w-[1920px] flex-col overflow-hidden bg-[#efefef] font-['DejaVu_Sans_Condensed','Noto_Sans',sans-serif] text-[12.500px] leading-4 text-black">
      <Defs />
      <div className="flex h-[30px] shrink-0 items-center bg-white pb-0.5 pl-[2px] font-['Open_Sans','Noto_Sans',sans-serif] text-[15px]">
        <QLogo s={22} />
        <T w={235} className="ml-[3px]">QGIS 2.18.20 - ken-river-watersheds</T>
        <svg width="13" height="14" className="ml-auto"><path d="M0 7.500h12" stroke="#000" strokeWidth="1.200" /></svg>
        <svg width="14" height="14" className="ml-[45px]" fill="none" stroke="#000" strokeWidth="1.200"><path d="M1 4h9v9H1zM4 4V1h9v9h-3" /></svg>
        <svg width="14" height="14" className="ml-[45px] mr-[25px]" stroke="#000" strokeWidth="1.200"><path d="M1 1l12 12M13 1L1 13" /></svg>
      </div>
      <div className="flex h-6 shrink-0 items-center gap-[15px] pl-2.5 pt-0.5">
        <Menu a="Pro" k="j" b="ect" w={40} /><Menu k="E" b="dit" w={21} /><Menu k="V" b="iew" w={28} /><Menu k="L" b="ayer" w={31} />
        <Menu k="S" b="ettings" w={46} /><Menu k="P" b="lugins" w={40} /><Menu a="Vect" k="o" b="r" w={36} /><Menu k="R" b="aster" w={37} />
        <Menu k="D" b="atabase" w={53} /><Menu k="W" b="eb" w={25} /><Menu a="Pro" k="c" b="essing" w={61} /><Menu k="H" b="elp" w={25} />
      </div>
      <Toolbar1 />
      <Toolbar2 />
      <div className="flex h-[864px] shrink-0 border-t-2 border-[#b9b9b9]">
        <LeftBar />
        <div className="flex w-[348px] shrink-0 flex-col">
          <BrowserPanel />
          <LayersPanel />
        </div>
        <Splitter />
        <Canvas />
        <Splitter />
        <Toolbox />
      </div>
      <StatusBar />
      <Taskbar />
    </div>
  );
}
